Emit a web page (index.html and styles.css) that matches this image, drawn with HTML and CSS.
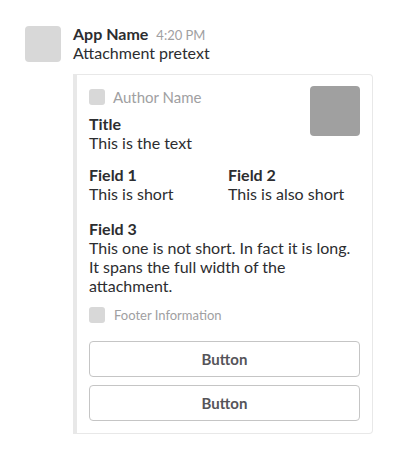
FILE: index.html
```html
<!DOCTYPE html>
<html>
<head>
<meta charset="utf-8">
<link rel="stylesheet" href="styles.css">
</head>
<body>
<div class="message">
  <div class="avatar"></div>
  <div class="content">
    <div class="header"><span class="app-name">App Name</span><span class="time">4:20 PM</span></div>
    <div class="pretext">Attachment pretext</div>
    <div class="attachment">
      <div class="top">
        <div class="main">
          <div class="author"><span class="author-icon"></span><span class="author-name">Author Name</span></div>
          <div class="title">Title</div>
          <div class="text">This is the text</div>
        </div>
        <div class="thumb"></div>
      </div>
      <div class="fields">
        <div class="field">
          <div class="field-title">Field 1</div>
          <div class="field-value">This is short</div>
        </div>
        <div class="field">
          <div class="field-title">Field 2</div>
          <div class="field-value">This is also short</div>
        </div>
        <div class="field field-long">
          <div class="field-title">Field 3</div>
          <div class="field-value">This one is not short. In fact it is long. It spans the full width of the attachment.</div>
        </div>
      </div>
      <div class="footer"><span class="footer-icon"></span><span class="footer-text">Footer Information</span></div>
      <div class="actions">
        <button class="btn">Button</button>
        <button class="btn">Button</button>
      </div>
    </div>
  </div>
</div>
</body>
</html>
```

FILE: styles.css
```css
html, body {
  margin: 0;
  padding: 0;
  background: #ffffff;
}
body {
  font-family: Lato, "Noto Sans", sans-serif;
  font-size: 16px;
  line-height: 18px;
  color: #2c2d30;
}
.message {
  display: flex;
  gap: 12px;
  padding: 25px 0 0 25px;
}
.avatar {
  width: 36px;
  height: 36px;
  margin-top: 1px;
  border-radius: 4px;
  background: #d8d8d8;
  flex: none;
}
.content {
  width: 300px;
}
.header {
  display: flex;
  align-items: baseline;
}
.app-name {
  font-weight: 700;
}
.time {
  margin-left: 8px;
  font-size: 13px;
  color: #a0a0a2;
}
.attachment {
  margin-top: 12px;
  border: 1px solid #e8e8e8;
  border-left: 4px solid #e8e8e8;
  border-radius: 0 4px 4px 0;
  padding: 11px 12px 12px 12px;
  line-height: 19px;
}
.top {
  display: flex;
  align-items: flex-start;
}
.main {
  flex: 1;
}
.thumb {
  width: 50px;
  height: 50px;
  border-radius: 4px;
  background: #a0a0a0;
  flex: none;
}
.author {
  display: flex;
  align-items: center;
  height: 22px;
  gap: 8px;
}
.author-icon {
  width: 16px;
  height: 16px;
  border-radius: 3px;
  background: #d8d8d8;
}
.author-name {
  font-size: 15px;
  color: #a0a0a2;
}
.title {
  margin-top: 6px;
  font-weight: 700;
}
.fields {
  display: grid;
  grid-template-columns: 139px 1fr;
  row-gap: 16px;
  margin-top: 13px;
}
.field-title {
  font-weight: 700;
}
.field-long {
  grid-column: 1 / span 2;
}
.footer {
  display: flex;
  align-items: center;
  gap: 9px;
  margin-top: 12px;
  height: 16px;
}
.footer-icon {
  width: 16px;
  height: 16px;
  border-radius: 3px;
  background: #d8d8d8;
}
.footer-text {
  font-size: 13px;
  color: #a0a0a2;
}
.actions {
  display: flex;
  flex-direction: column;
  gap: 8px;
  margin-top: 18px;
}
.btn {
  height: 36px;
  border: 1px solid #c5c5c5;
  border-radius: 4px;
  background: #ffffff;
  font-family: Lato, "Noto Sans", sans-serif;
  font-size: 15px;
  font-weight: 700;
  color: #555459;
  padding: 0;
}
```
